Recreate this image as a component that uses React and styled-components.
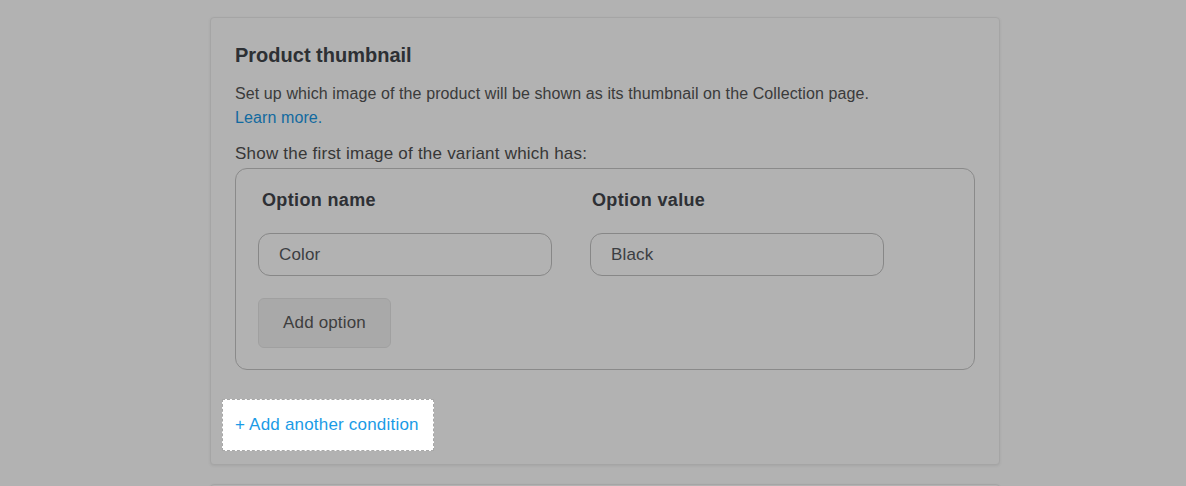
import React from "react";
import styled, { createGlobalStyle } from "styled-components";

const Global = createGlobalStyle`
  html, body { margin: 0; padding: 0; background: #ffffff; }
  body { font-family: "Liberation Sans", Arial, sans-serif; }
  * { box-sizing: border-box; }
`;

const Page = styled.div`
  padding: 17px 186px 0 210px;
  display: flex;
  flex-direction: column;
  gap: 19px;
  height: 486px;
  overflow: hidden;
`;

const Card = styled.section`
  background: #ffffff;
  border: 1px solid #ededed;
  border-radius: 4px;
  box-shadow: 0 1px 3px rgba(0, 0, 0, 0.08);
  padding: ${(p) => p.$pad || "25px 24px 13px 24px"};
  min-height: ${(p) => p.$minH || "auto"};
`;

const Title = styled.h2`
  margin: 0;
  font-size: 20px;
  line-height: 24px;
  font-weight: 700;
  color: #41454b;
`;

const Desc = styled.p`
  margin: 15px 0 0;
  font-size: 16px;
  line-height: 24px;
  letter-spacing: 0.1px;
  color: #555555;
`;

const LearnLink = styled.a`
  display: block;
  color: #1a98e6;
  text-decoration: none;
`;

const Lead = styled.div`
  margin-top: 12px;
  font-size: 17px;
  line-height: 24px;
  letter-spacing: 0.22px;
  color: #4f4f4f;
`;

const ConditionBox = styled.div`
  margin-top: 2px;
  border: 1px solid #c6c6c6;
  border-radius: 12px;
  padding: 19px 22px 21px 22px;
`;

const Columns = styled.div`
  display: grid;
  grid-template-columns: 294px 294px;
  column-gap: 38px;
`;

const Field = styled.div`
  display: flex;
  flex-direction: column;
`;

const Label = styled.div`
  padding-left: ${(p) => p.$indent || "4px"};
  font-size: 18px;
  line-height: 24px;
  font-weight: 700;
  letter-spacing: 0.35px;
  color: #42464c;
`;

const Input = styled.div`
  margin-top: 21px;
  height: 43px;
  border: 1px solid #c2c2c2;
  border-radius: 12px;
  padding: 0 20px;
  display: flex;
  align-items: center;
  font-size: 17px;
  letter-spacing: 0.15px;
  color: #565a5f;
  background: #ffffff;
`;

const Button = styled.button`
  margin-top: 22px;
  width: 133px;
  height: 50px;
  border: 1px solid #e6e6e6;
  border-radius: 6px;
  background: #f3f3f3;
  font-family: inherit;
  font-size: 17px;
  letter-spacing: 0.15px;
  color: #5a5a5a;
  cursor: pointer;
`;

const Highlight = styled.div`
  position: relative;
  z-index: 2;
  align-self: flex-start;
  margin: 29px 0 0 -13px;
  width: 212px;
  height: 52px;
  background: #ffffff;
  border: 1px dashed #a8a8a8;
  padding: 0 12px;
  display: flex;
  align-items: center;
`;

const AddCondition = styled.a`
  font-size: 17px;
  letter-spacing: 0.2px;
  color: #1a9be6;
  text-decoration: none;
  white-space: nowrap;
`;

const CardBody = styled.div`
  display: flex;
  flex-direction: column;
`;

const Overlay = styled.div`
  position: fixed;
  inset: 0;
  background: rgba(0, 0, 0, 0.3);
  z-index: 1;
  pointer-events: none;
`;

export default function App() {
  return (
    <>
      <Global />
      <Page>
        <Card>
          <CardBody>
            <Title>Product thumbnail</Title>
            <Desc>
              Set up which image of the product will be shown as its thumbnail on the Collection page.
              <LearnLink href="#">Learn more.</LearnLink>
            </Desc>
            <Lead>Show the first image of the variant which has:</Lead>
            <ConditionBox>
              <Columns>
                <Field>
                  <Label>Option name</Label>
                  <Input>Color</Input>
                </Field>
                <Field>
                  <Label $indent="2px">Option value</Label>
                  <Input>Black</Input>
                </Field>
              </Columns>
              <Button>Add option</Button>
            </ConditionBox>
            <Highlight>
              <AddCondition href="#">+ Add another condition</AddCondition>
            </Highlight>
          </CardBody>
        </Card>
        <Card $minH="120px" />
      </Page>
      <Overlay />
    </>
  );
}
